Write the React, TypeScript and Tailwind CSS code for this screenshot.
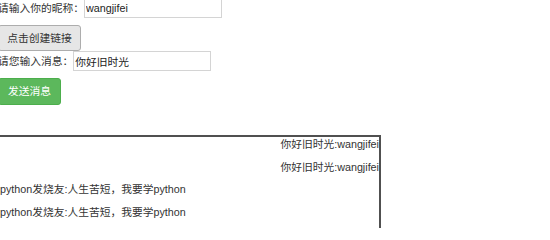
const messages = [
    { text: "你好旧时光:wangjifei", mine: true },
    { text: "你好旧时光:wangjifei", mine: true },
    { text: "python发烧友:人生苦短，我要学python", mine: false },
    { text: "python发烧友:人生苦短，我要学python", mine: false },
];

const FieldRow: React.FC<{ label: string; value: string; width: string }> = ({
    label,
    value,
    width,
}) => {
    return (
        <div className="flex h-[20px] items-center">
            <span className="whitespace-nowrap">{label}</span>
            <input
                type="text"
                defaultValue={value}
                className={`h-[20px] ${width} border border-[#d4d4d4] bg-white px-[1px] text-[10.75px] text-[#222] outline-none`}
            />
        </div>
    );
};

export default function App() {
    return (
        <div className="-ml-[2px] -mt-[2px] font-['Liberation_Sans','Noto_Sans_CJK_SC',sans-serif] text-[10.75px] leading-[15px] text-[#333]">
            <FieldRow label="请输入你的昵称：" value="wangjifei" width="w-[138px]" />
            <button className="mt-[7px] block h-[26px] w-[83px] rounded-[3px] border border-[#adadad] bg-[#e6e6e6] text-center text-[#333]">
                点击创建链接
            </button>
            <FieldRow label="请您输入消息：" value="你好旧时光" width="w-[138px]" />
            <button className="mt-[7px] block h-[27px] w-[63px] rounded-[3px] border border-[#4cae4c] bg-[#5cb85c] text-center text-white">
                发送消息
            </button>
            <div className="mt-[30px] h-[93px] w-[383px] border-x-2 border-t-2 border-[#505050]">
                {messages.map((m, i) => (
                    <p
                        key={i}
                        className={`mb-[7.5px] whitespace-nowrap ${m.mine ? "text-right" : "text-left"}`}
                    >
                        {m.text}
                    </p>
                ))}
            </div>
        </div>
    );
}
